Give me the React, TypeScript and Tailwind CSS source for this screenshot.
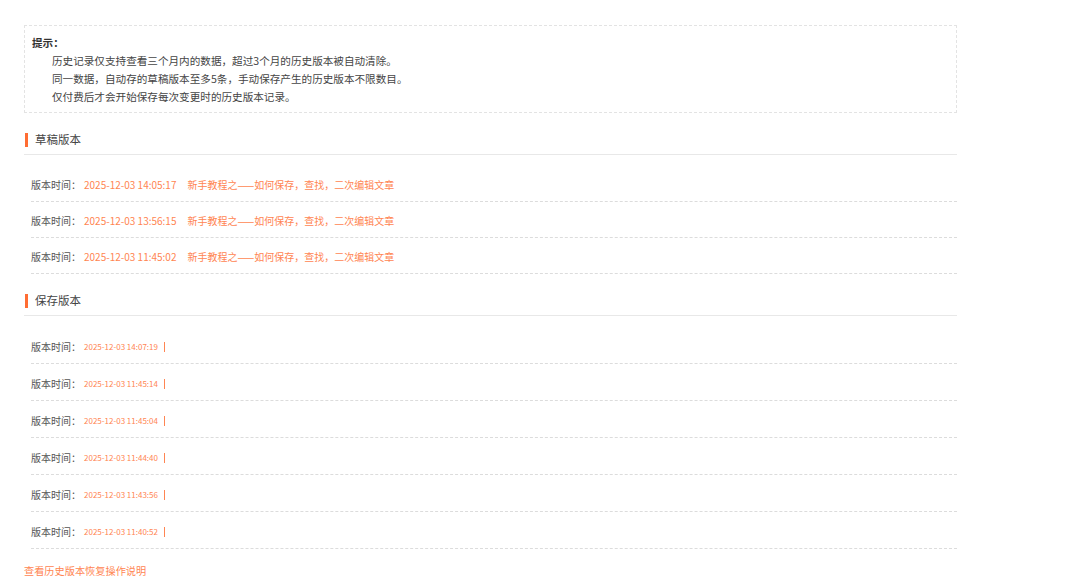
import React from "react";

const FONT = { fontFamily: '"Noto Sans CJK SC", "Noto Sans", sans-serif' };

const drafts = [
  "2025-12-03 14:05:17",
  "2025-12-03 13:56:15",
  "2025-12-03 11:45:02",
];
const saves = [
  "2025-12-03 14:07:19",
  "2025-12-03 11:45:14",
  "2025-12-03 11:45:04",
  "2025-12-03 11:44:40",
  "2025-12-03 11:43:56",
  "2025-12-03 11:40:52",
];

function Header({ title }: { title: string }) {
  return (
    <div className="mt-[13px] h-[29px] flex items-center border-b border-[#e8e8e8]">
      <span className="w-[3px] h-[14px] bg-[#ff6d33] mr-[7px] ml-[1px]" />
      <span className="text-[11.5px] text-[#444] leading-none">{title}</span>
    </div>
  );
}

export default function App() {
  return (
    <div className="bg-white w-[1080px] h-[583px] overflow-hidden" style={FONT}>
      <div className="pl-[24px] pt-[25px] w-[957px]">
        <div className="border border-dashed border-[#e3e3e3] px-[7px] pt-[8px] pb-[6px] text-[10.6px] leading-[18px] text-[#444]">
          <div className="font-bold text-[#333]">提示：</div>
          <div className="pl-[20px]">历史记录仅支持查看三个月内的数据，超过3个月的历史版本被自动清除。</div>
          <div className="pl-[20px]">同一数据，自动存的草稿版本至多5条，手动保存产生的历史版本不限数目。</div>
          <div className="pl-[20px]">仅付费后才会开始保存每次变更时的历史版本记录。</div>
        </div>

        <Header title="草稿版本" />
        <div className="pt-[11px] ml-[7px]">
          {drafts.map((d) => (
            <div key={d} className="h-[36px] flex items-center pt-[2px] border-b border-dashed border-[#dcdcdc] text-[10px] leading-none">
              <span className="text-[#555]">版本时间：</span>
              <span className="text-[#ff8552] ml-[3px]">{d}</span>
              <span className="text-[#ff8552] ml-[11px]">新手教程之——如何保存，查找，二次编辑文章</span>
            </div>
          ))}
        </div>

        <Header title="保存版本" />
        <div className="pt-[11px] ml-[7px]">
          {saves.map((d) => (
            <div key={d} className="h-[37px] flex items-center pt-[3px] border-b border-dashed border-[#dcdcdc] leading-none">
              <span className="text-[10px] text-[#555]">版本时间：</span>
              <span className="text-[8px] text-[#ff8552] ml-[3px]">{d}</span>
              <span className="ml-[6px] w-px h-[10px] bg-[#ff8552]" />
            </div>
          ))}
        </div>

        <div className="pt-[17px] text-[10.2px] leading-none text-[#ff8552]">查看历史版本恢复操作说明</div>
      </div>
    </div>
  );
}
